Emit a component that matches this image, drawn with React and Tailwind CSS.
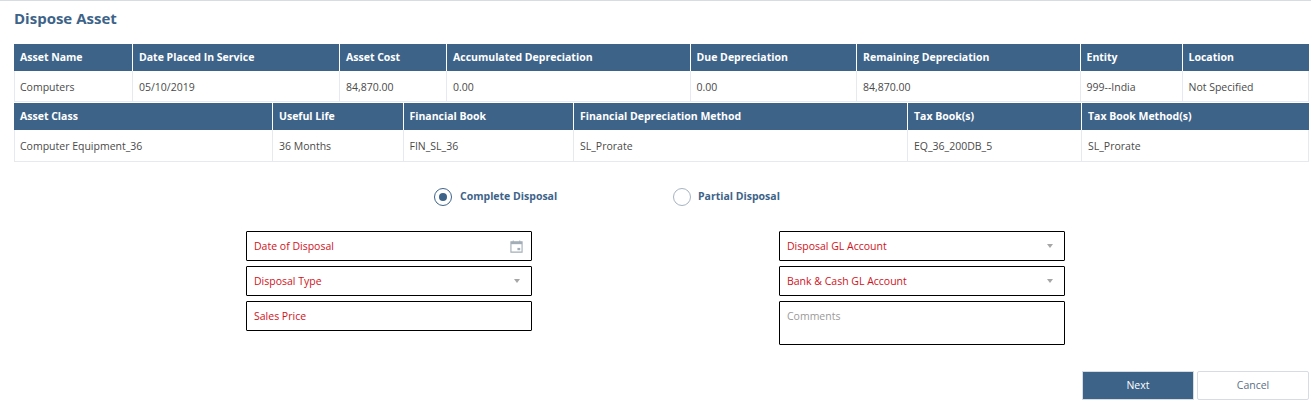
const topHeaders = [
  'Asset Name',
  'Date Placed In Service',
  'Asset Cost',
  'Accumulated Depreciation',
  'Due Depreciation',
  'Remaining Depreciation',
  'Entity',
  'Location',
];
const topValues = ['Computers', '05/10/2019', '84,870.00', '0.00', '0.00', '84,870.00', '999--India', 'Not Specified'];

const bottomHeaders = [
  'Asset Class',
  'Useful Life',
  'Financial Book',
  'Financial Depreciation Method',
  'Tax Book(s)',
  'Tax Book Method(s)',
];
const bottomValues = ['Computer Equipment_36', '36 Months', 'FIN_SL_36', 'SL_Prorate', 'EQ_36_200DB_5', 'SL_Prorate'];

function InfoTable({ headers, values, cols, rowHeight, cellTop }) {
  return (
    <div>
      <div className={`grid ${cols} h-[27px] bg-[#3d6389]`}>
        {headers.map((h, i) => (
          <div
            key={h}
            className={`flex items-center pl-[6px] text-[10.5px] font-bold text-white ${i > 0 ? 'border-l border-white' : ''}`}
          >
            {h}
          </div>
        ))}
      </div>
      <div className={`grid ${cols} ${rowHeight} border-b border-[#e6eaee] bg-white`}>
        {values.map((v, i) => (
          <div
            key={i}
            className={`flex items-center border-l border-[#e6eaee] pl-[6px] ${cellTop} text-[10.5px] text-[#4a4a4a] first:pl-[5px] last:border-r`}
          >
            {v}
          </div>
        ))}
      </div>
    </div>
  );
}

function Field({ label, children }) {
  return (
    <div className="flex h-[30px] w-[286px] items-center justify-between rounded-[1px] border border-black pl-[7px] pr-[9px]">
      <span className="pt-[2px] text-[10.5px] text-[#d0121b]">{label}</span>
      {children}
    </div>
  );
}

function Caret() {
  return <div className="mr-[2px] h-0 w-0 border-x-[3.5px] border-t-[4px] border-x-transparent border-t-[#a6a6a6]" />;
}

function CalendarIcon() {
  return (
    <svg className="-mr-[1px]" width="13" height="13" viewBox="0 0 14 14" fill="none">
      <path d="M1 2h12v11H1z" stroke="#a3adb8" strokeWidth="1.2" />
      <path d="M1 2h12v2.5H1z" fill="#a3adb8" />
      <path d="M3.5 0.5v2M10.5 0.5v2" stroke="#a3adb8" />
      <path d="M8 8.5h3V11H8z" fill="#a3adb8" />
    </svg>
  );
}

export default function App() {
  return (
    <div className="h-[417px] w-[1311px] overflow-hidden border-t border-[#d6dce2] bg-white font-['Open_Sans',sans-serif]">
      <h1 className="pl-[14px] pt-[8px] text-[15px] font-bold leading-[19px] text-[#3d6389]">Dispose Asset</h1>

      <div className="mt-[16px] flex flex-col gap-[1px] pl-[14px] pr-[2px]">
        <InfoTable
          headers={topHeaders}
          values={topValues}
          cols="grid-cols-[118px_207px_107px_243.5px_166.5px_223.5px_102px_127.5px]"
          rowHeight="h-[31px]"
          cellTop="pt-[3px]"
        />
        <InfoTable
          headers={bottomHeaders}
          values={bottomValues}
          cols="grid-cols-[258px_130.5px_170.5px_334px_174px_228px]"
          rowHeight="h-[32px]"
          cellTop="pt-[2px]"
        />
      </div>

      <div className="mt-[25px] flex h-[20px] items-center pl-[434px]">
        <div className="flex w-[239px] items-center gap-[8px]">
          <div className="flex h-[18px] w-[18px] items-center justify-center rounded-full border border-[#3d6389]">
            <div className="h-[8px] w-[8px] rounded-full bg-[#3d6389]" />
          </div>
          <span className="text-[10.5px] font-bold text-[#3d6389]">Complete Disposal</span>
        </div>
        <div className="flex items-center gap-[7px]">
          <div className="h-[18px] w-[18px] rounded-full border border-[#a5b3c2]" />
          <span className="text-[10.5px] font-bold text-[#3d6389]">Partial Disposal</span>
        </div>
      </div>

      <div className="mt-[24px] flex gap-[247px] pl-[246px]">
        <div className="flex flex-col gap-[5px]">
          <Field label="Date of Disposal">
            <CalendarIcon />
          </Field>
          <Field label="Disposal Type">
            <Caret />
          </Field>
          <Field label="Sales Price" />
        </div>
        <div className="flex flex-col gap-[5px]">
          <Field label="Disposal GL Account">
            <Caret />
          </Field>
          <Field label="Bank & Cash GL Account">
            <Caret />
          </Field>
          <div className="h-[44px] w-[286px] rounded-[1px] border border-black pl-[7px] pt-[7px] text-[10.5px] leading-[15px] text-[#9a9a9a]">
            Comments
          </div>
        </div>
      </div>

      <div className="mt-[26px] flex justify-end gap-[3px] pr-[2px]">
        <button className="h-[29px] w-[112px] border border-[#d6dce2] bg-[#3d6389] text-[10.5px] text-white">Next</button>
        <button className="h-[29px] w-[112px] rounded-[2px] border border-[#d6dce2] bg-white text-[10.5px] text-[#5b6f84]">Cancel</button>
      </div>
    </div>
  );
}
